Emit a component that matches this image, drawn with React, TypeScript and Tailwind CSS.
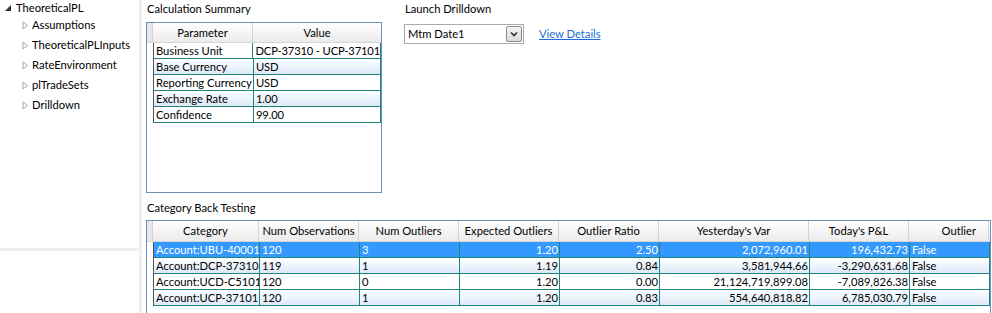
import React from 'react';

const treeChildren = ['Assumptions', 'TheoreticalPLInputs', 'RateEnvironment', 'plTradeSets', 'Drilldown'];

const summary = [
  ['Business Unit', 'DCP-37310 - UCP-37101'],
  ['Base Currency', 'USD'],
  ['Reporting Currency', 'USD'],
  ['Exchange Rate', '1.00'],
  ['Confidence', '99.00'],
];

type Col = { label: string; w: string; align: 'left' | 'right' };

const cols: Col[] = [
  { label: 'Category', w: 'w-[106px]', align: 'left' },
  { label: 'Num Observations', w: 'w-[100px]', align: 'left' },
  { label: 'Num Outliers', w: 'w-[100px]', align: 'left' },
  { label: 'Expected Outliers', w: 'w-[100px]', align: 'right' },
  { label: 'Outlier Ratio', w: 'w-[100px]', align: 'right' },
  { label: "Yesterday's Var", w: 'w-[150px]', align: 'right' },
  { label: "Today's P&L", w: 'w-[100px]', align: 'right' },
  { label: 'Outlier', w: 'w-[80px]', align: 'left' },
];

const rows = [
  ['Account:UBU-40001', '120', '3', '1.20', '2.50', '2,072,960.01', '196,432.73', 'False'],
  ['Account:DCP-37310', '119', '1', '1.19', '0.84', '3,581,944.66', '-3,290,631.68', 'False'],
  ['Account:UCD-C5101', '120', '0', '1.20', '0.00', '21,124,719,899.08', '-7,089,826.38', 'False'],
  ['Account:UCP-37101', '120', '1', '1.20', '0.83', '554,640,818.82', '6,785,030.79', 'False'],
];

const headerBg = 'bg-gradient-to-b from-white to-[#ebebeb]';

const TreeNode = ({ label }: { label: string }) => (
  <div className="flex items-center h-[20px] pl-[22px] whitespace-nowrap">
    <svg width="7" height="9" viewBox="0 0 7 9" className="mr-[3px] shrink-0">
      <path d="M1 1 L5.5 4.5 L1 8 Z" fill="none" stroke="#a8a8a8" strokeWidth="1" />
    </svg>
    <span>{label}</span>
  </div>
);

export default function App() {
  return (
    <div className="w-[992px] h-[313px] flex bg-white text-[11.2px] leading-[16px] text-black font-['Segoe_UI','Lato',sans-serif] overflow-hidden">
      {/* tree */}
      <div className="w-[139px] flex flex-col">
        <div className="h-[248px]">
          <div className="flex items-center h-[15px] pl-[4px]">
            <svg width="8" height="8" viewBox="0 0 8 8" className="mr-[4px] shrink-0">
              <path d="M7 1 L7 7 L1 7 Z" fill="#333" />
            </svg>
            <span>TheoreticalPL</span>
          </div>
          <div>
            {treeChildren.map((c) => (
              <TreeNode key={c} label={c} />
            ))}
          </div>
        </div>
        <div className="h-[3px] bg-[#efefef]" />
      </div>
      <div className="w-[3px] bg-[#efefef]" />

      {/* main */}
      <div className="flex-1 pl-[4px] flex flex-col">
        <div className="flex">
          <div className="w-[236px]">
            <div className="h-[22px] pl-[1px] pt-[1px]">Calculation Summary</div>
            <div className="h-[171px] border border-[#6e8fb6] bg-white">
              <div className={`flex h-[20px] ${headerBg} border-b border-[#d5d5d5]`}>
                <div className="w-[6px] bg-[#e8e8e8] border-r border-[#d5d5d5]" />
                <div className="w-[100px] text-center leading-[20px] border-r border-[#d5d5d5]">Parameter</div>
                <div className="flex-1 text-center leading-[20px]">Value</div>
              </div>
              <div className="ml-[6px] w-[228px] border-l border-[#555]">
                {summary.map(([k, v], i) => (
                  <div
                    key={k}
                    className={`flex h-[16px] border-b border-[#1d8579] ${
                      i % 2 === 1 ? 'bg-gradient-to-b from-white to-[#dde9f8]' : 'bg-white'
                    }`}
                  >
                    <div className="w-[100px] pl-[2px] border-r border-[#1d8579] whitespace-nowrap overflow-hidden leading-[15px]">{k}</div>
                    <div className="flex-1 pl-[2px] whitespace-nowrap leading-[15px] tracking-[-0.15px] border-r border-[#1d8579]">{v}</div>
                  </div>
                ))}
              </div>
            </div>
          </div>

          <div className="ml-[22px]">
            <div className="h-[16px] pl-[1px] pt-[1px]">Launch Drilldown</div>
            <div className="flex items-center mt-[8px]">
              <div className="w-[120px] h-[20px] border border-[#a9a9a9] flex items-center justify-between pl-[3px] pr-[1px] bg-white">
                <span>Mtm Date1</span>
                <div className="w-[16px] h-[16px] border border-[#8c8c8c] rounded-[2px] bg-gradient-to-b from-[#f4f4f4] to-[#dcdcdc] flex items-center justify-center">
                  <svg width="8" height="6" viewBox="0 0 8 6">
                    <path d="M1 1.5 L4 4.5 L7 1.5" fill="none" stroke="#333" strokeWidth="1.6" />
                  </svg>
                </div>
              </div>
              <a className="ml-[15px] text-[#1a6fd6] underline cursor-pointer">View Details</a>
            </div>
          </div>
        </div>

        <div className="h-[15px] pl-[1px] mt-[7px]">Category Back Testing</div>
        <div className="mt-[5px] w-[845px] flex-1 border-l border-t border-r border-[#6e8fb6]">
          <div className={`flex h-[21px] ${headerBg} border-b border-[#d5d5d5]`}>
            <div className="w-[6px] bg-[#e8e8e8] border-r border-[#d5d5d5]" />
            {cols.map((c) => (
              <div
                key={c.label}
                className={`${c.w} shrink-0 leading-[20px] border-r border-[#d5d5d5] whitespace-nowrap overflow-hidden ${
                  c.label === 'Outlier' ? 'text-right pr-[12px]' : 'text-center'
                }`}
              >
                {c.label}
              </div>
            ))}
          </div>
          <div className="ml-[6px] border-l border-[#555] w-fit">
            {rows.map((r, i) => {
              const sel = i === 0;
              const bg = sel
                ? 'bg-[#3399ff] text-white'
                : i % 2 === 1
                ? 'bg-gradient-to-b from-white to-[#dde9f8]'
                : 'bg-white';
              return (
                <div key={r[0]} className={`flex h-[16px] border-b border-[#1d8579] ${bg}`}>
                  {r.map((v, j) => (
                    <div
                      key={j}
                      className={`${cols[j].w} shrink-0 leading-[15px] whitespace-nowrap overflow-hidden border-r border-[#1d8579] ${
                        cols[j].align === 'right' ? 'text-right pr-[1px]' : 'text-left pl-[2px]'
                      } ${j === 0 ? 'pl-[1px]' : ''}`}
                    >
                      {v}
                    </div>
                  ))}
                </div>
              );
            })}
          </div>
        </div>
      </div>
    </div>
  );
}
